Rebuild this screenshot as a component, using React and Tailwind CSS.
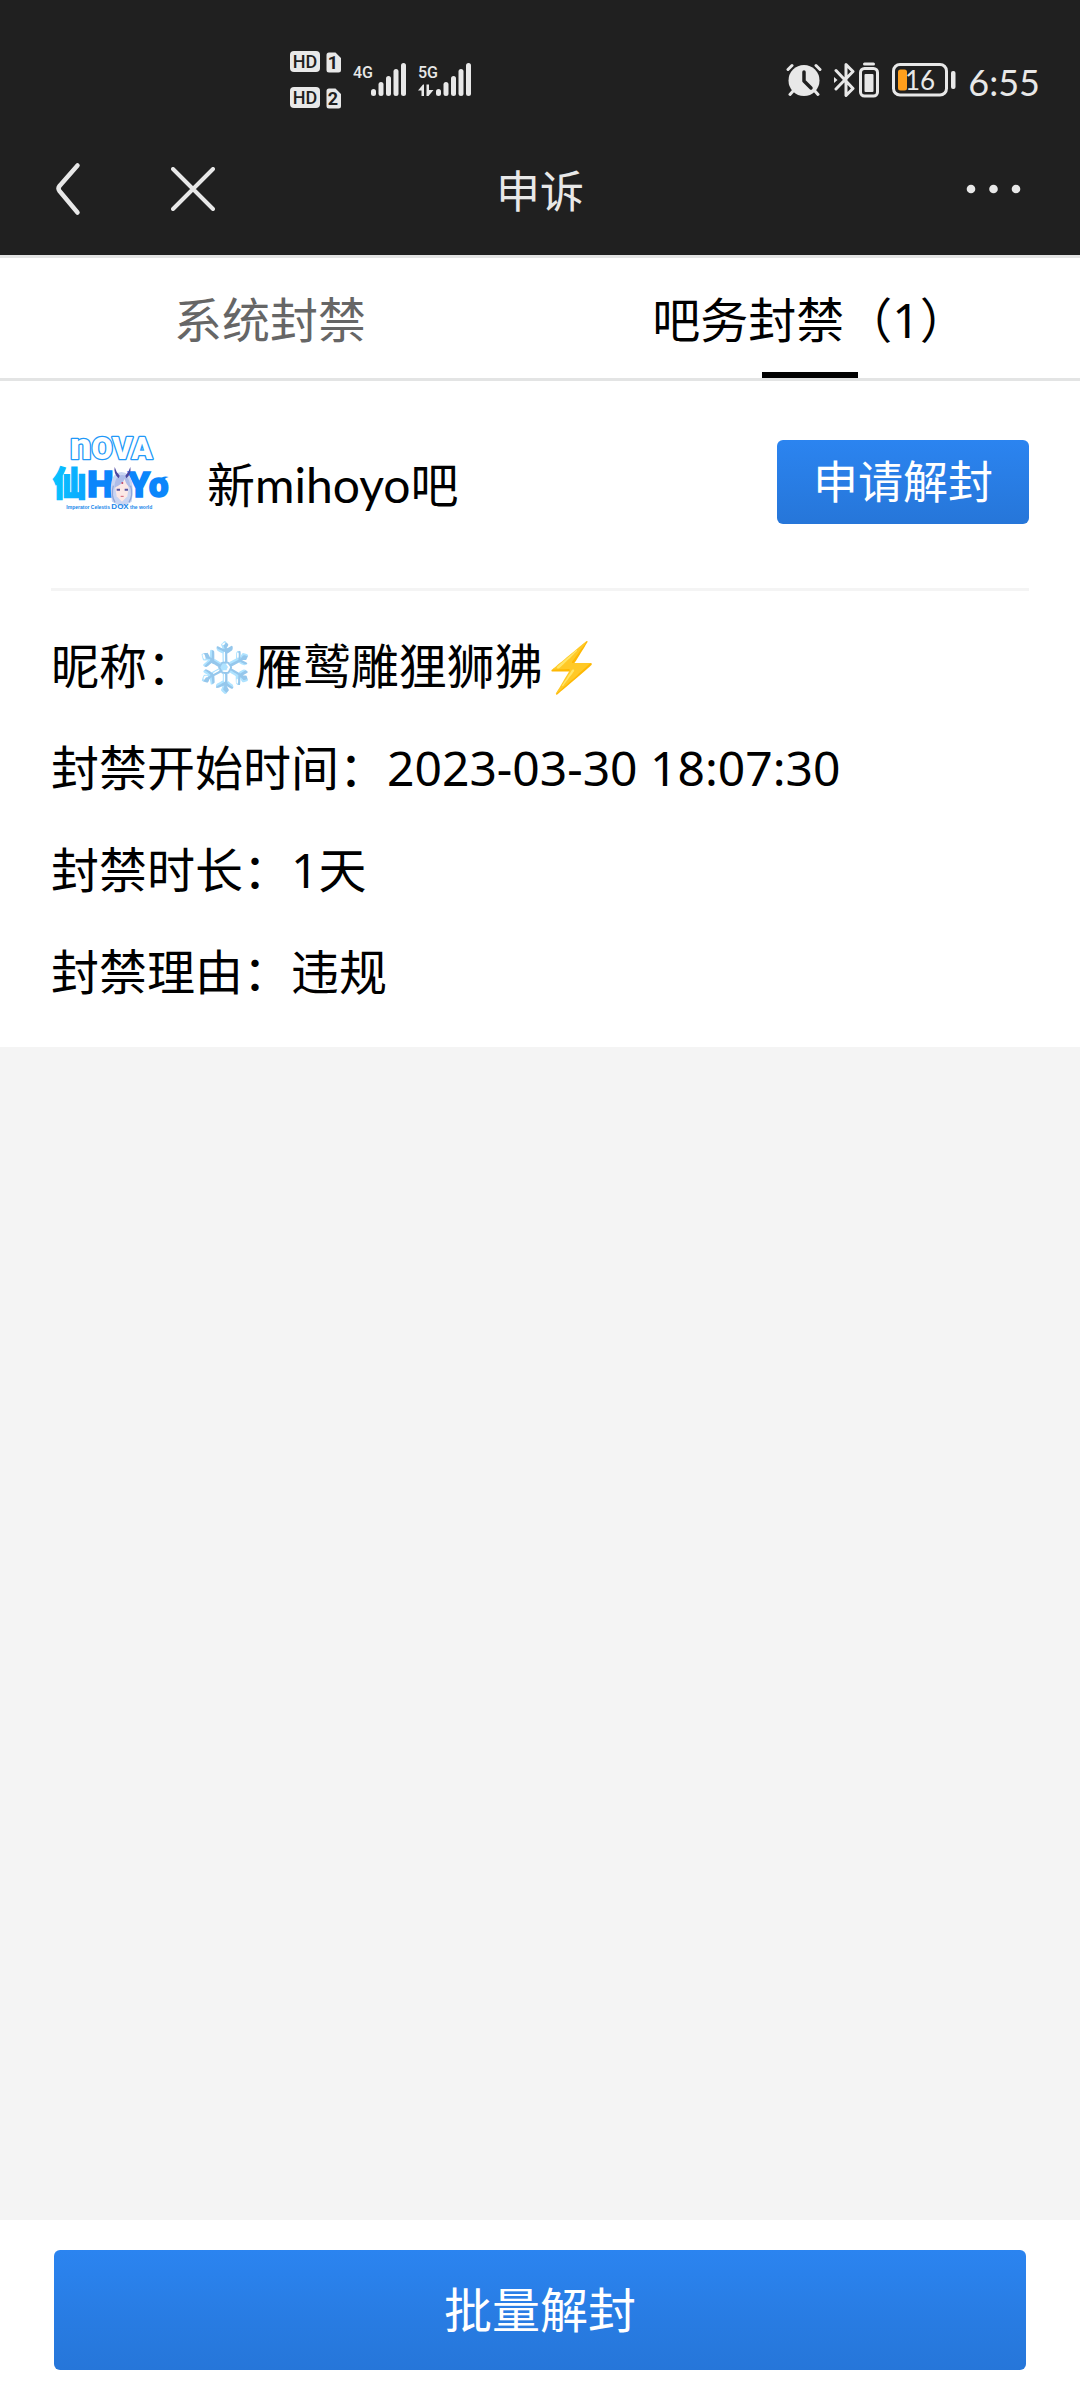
import React from "react";

const FONT = "font-['Noto_Sans','Noto_Sans_CJK_SC','Noto_Color_Emoji',sans-serif]";

function HdSim({ sim }) {
  return (
    <svg width="52" height="22" viewBox="0 0 52 22" fontFamily="Roboto, sans-serif" aria-hidden="true">
      <rect x="0" y="0" width="30" height="21" rx="4" fill="#e8e8e8" />
      <text x="15" y="17" fontSize="18" fontWeight="500" textAnchor="middle" fill="#202020">HD</text>
      <path d="M39 1.500h6.500l5.500 5.500v12a2.500 2.500 0 0 1-2.500 2.500h-9.500a2.500 2.500 0 0 1-2.500-2.500v-15a2.500 2.500 0 0 1 2.500-2.500z" fill="#e8e8e8" />
      <text x="43" y="18" fontSize="18" fontWeight="700" textAnchor="middle" fill="#202020">{sim}</text>
    </svg>
  );
}

function Signal({ label, arrows }) {
  const tops = [26, 19, 13, 6, 0];
  return (
    <svg width="53" height="33" viewBox="0 0 53 33" fill="#e8e8e8" aria-hidden="true">
      <text x="0" y="15" fontSize="16" fontWeight="500" fontFamily="Roboto, sans-serif">{label}</text>
      {arrows && (
        <path d="M0 27.500 5 21.500h1V33H3.500v-5.500zM8.500 21.500H11v5.500h4.500L10.500 33h-2z" />
      )}
      {tops.map((top, i) => (
        <rect key={top} x={18 + i * 7.5} y={top} width="5" height={33 - top} rx="2.500" />
      ))}
    </svg>
  );
}

function Alarm() {
  return (
    <svg width="36" height="34" viewBox="0 0 36 34" fill="none" stroke="#e8e8e8" strokeLinecap="round" aria-hidden="true">
      <circle cx="18" cy="17.500" r="15.500" fill="#e8e8e8" stroke="none" />
      <path d="M2 6.500 6 2.500M34 6.500 30 2.500M8 27l-4 4.500M28 27l4 4.500" strokeWidth="3" />
      <path d="M18 9v9l7 7" stroke="#202020" strokeWidth="3.500" strokeLinejoin="round" />
    </svg>
  );
}

function Bluetooth() {
  return (
    <svg width="22" height="36" viewBox="0 0 22 36" fill="none" stroke="#e8e8e8" strokeWidth="3" strokeLinejoin="round" strokeLinecap="round" aria-hidden="true">
      <path d="M2 8.500 19 26.500l-7 7V2.500l7 7L2 27" />
      <path d="M0 15v6l3.500-3z" fill="#e8e8e8" stroke="none" />
    </svg>
  );
}

function DeviceBattery() {
  return (
    <svg width="20" height="36" viewBox="0 0 20 36" aria-hidden="true">
      <rect x="4" y="0.500" width="12" height="3" rx="1.500" fill="#e8e8e8" />
      <rect x="1.500" y="6.500" width="17" height="27.500" rx="4" fill="none" stroke="#e8e8e8" strokeWidth="3" />
      <rect x="5.500" y="12" width="9" height="18" rx="1" fill="#e8e8e8" />
    </svg>
  );
}

function Battery() {
  return (
    <svg width="64" height="34" viewBox="0 0 64 34" aria-label="16%">
      <rect x="1.500" y="1.500" width="53" height="30.500" rx="6.500" fill="none" stroke="#e8e8e8" strokeWidth="3" />
      <rect x="59" y="8" width="4.500" height="18" rx="2" fill="#e8e8e8" />
      <rect x="6" y="6.500" width="9" height="21" rx="2.500" fill="#ff9f1c" />
      <text x="13" y="27" fontSize="26" fill="#e8e8e8" fontFamily="Lato, sans-serif">16</text>
    </svg>
  );
}

function StatusBar() {
  return (
    <div className="flex h-[123px] items-center justify-between pl-[290px] pr-10 pt-9">
      <div className="flex items-center">
        <div className="flex flex-col gap-[14px]">
          <HdSim sim="1" />
          <HdSim sim="2" />
        </div>
        <div className="ml-[11px] flex gap-3">
          <Signal label="4G" />
          <Signal label="5G" arrows />
        </div>
      </div>
      <div className="flex items-center">
        <Alarm />
        <div className="ml-3 flex gap-[3px]">
          <Bluetooth />
          <DeviceBattery />
        </div>
        <div className="ml-[13px] mr-3">
          <Battery />
        </div>
        <span className="pt-1 font-['Lato',sans-serif] text-[36px] leading-9 text-[#e8e8e8]">6:55</span>
      </div>
    </div>
  );
}

function NavBar() {
  return (
    <div className="grid h-[132px] grid-cols-3 items-center px-[54px]">
      <div className="flex items-center gap-[89px]">
        <button type="button" aria-label="返回">
          <svg width="28" height="54" viewBox="0 0 28 54" fill="none" stroke="#e8e8e8" strokeWidth="4.500" strokeLinecap="round" strokeLinejoin="round" aria-hidden="true">
            <path d="M23.500 3.500 5.500 24q-2 2.500 0 5l18 21.500" />
          </svg>
        </button>
        <button type="button" aria-label="关闭">
          <svg width="44" height="44" viewBox="0 0 44 44" fill="none" stroke="#e8e8e8" strokeWidth="4" strokeLinecap="round" aria-hidden="true">
            <path d="m2 2 40 40M42 2 2 42" />
          </svg>
        </button>
      </div>
      <h1 className="pt-1 text-center text-[44px] leading-[60px] text-[#e8e8e8]">申诉</h1>
      <button type="button" aria-label="更多" className="justify-self-end pr-[5px]">
        <svg width="55" height="10" viewBox="0 0 55 10" fill="#e8e8e8" aria-hidden="true">
          <circle cx="5" cy="5" r="4.300" />
          <circle cx="27.500" cy="5" r="4.300" />
          <circle cx="50" cy="5" r="4.300" />
        </svg>
      </button>
    </div>
  );
}

function Tabs() {
  return (
    <div role="tablist" className="grid h-[126px] grid-cols-2 border-y-[3px] border-[#e3e4e4] bg-white text-5xl leading-[72px]">
      <button type="button" role="tab" aria-selected="false" className="pt-1 text-[#666]">系统封禁</button>
      <button type="button" role="tab" aria-selected="true" className="relative pt-1 text-black">
        吧务封禁（1）
        <span className="absolute inset-x-0 bottom-0 mx-auto h-1.5 w-24 bg-black" />
      </button>
    </div>
  );
}

function ForumLogo() {
  return (
    <svg width="120" height="120" viewBox="0 0 360 360" role="img" aria-label="新mihoyo吧" className="shrink-0">
      <defs>
        <linearGradient id="xian" x1="0" x2="1" y1="0" y2="0">
          <stop offset="0" stopColor="#09c4ff" />
          <stop offset="1" stopColor="#0aa5ff" />
        </linearGradient>
      </defs>
      <text x="58" y="103" fontSize="92" fontWeight="900" fill="#fff" stroke="#2198f8" strokeWidth="8" paintOrder="stroke" strokeLinejoin="round" fontFamily="Roboto, 'Liberation Sans', sans-serif">
        <tspan fontSize="112">n</tspan>OVA
      </text>
      <text x="5" y="214" fontSize="102" fontWeight="900" fill="url(#xian)" stroke="url(#xian)" strokeWidth="4" fontFamily="'Noto Sans CJK SC', sans-serif">仙</text>
      <g fill="#0b86fb" stroke="#0b86fb" strokeWidth="5" fontFamily="Roboto, 'Liberation Sans', sans-serif" fontWeight="900">
        <text x="109" y="217" fontSize="112">H</text>
        <text x="232" y="217" fontSize="104">Yo</text>
      </g>
      <path d="M321 166q16-16 32-10-14 3-22 20z" fill="#0b86fb" />
      <path d="M183 230q-10-60 8-80 20-18 42 0 18 22 9 80l-28 16z" fill="#c9d5f2" />
      <path d="M193 190q3-26 20-34 18 10 20 34l-4 24-16 16-16-16z" fill="#fbe8e6" />
      <path d="M190 188q2-38 24-38t24 38q-12-6-17-26-8 18-31 26z" fill="#aebce8" />
      <path d="M191 126q-4 20 12 34l3-8q-10-9-15-26zM238 126q4 20-12 34l-3-8q10-9 15-26z" fill="#4c489f" />
      <path d="M197 194h10M221 194h10" stroke="#5653a0" strokeWidth="6" />
      <circle cx="214" cy="174" r="3" fill="#c04668" />
      <path d="M209 214h9" stroke="#d25d70" strokeWidth="3" />
      <path d="M187 182q-8 30 5 50M239 182q8 30-5 50" fill="none" stroke="#91a7da" strokeWidth="4" />
      <text x="46" y="252" fontSize="15" fill="#1787ea" fontFamily="'Liberation Sans', sans-serif" fontWeight="700">
        Imperator Celestis <tspan fontSize="24">DOX</tspan> the world
      </text>
    </svg>
  );
}

const DETAILS = [
  ["昵称：", "❄️雁鹫雕狸狮狒⚡"],
  ["封禁开始时间：", "2023-03-30 18:07:30"],
  ["封禁时长：", "1天"],
  ["封禁理由：", "违规"],
];

function BanCard() {
  return (
    <section className="bg-white px-[51px] pb-6 text-5xl text-black">
      <div className="flex h-[210px] items-center border-b-[3px] border-[#f4f4f4]">
        <ForumLogo />
        <h2 className="ml-9 flex-1 font-['Lato','Noto_Sans_CJK_SC',sans-serif] leading-[72px]">新mihoyo吧</h2>
        <button type="button" className="mb-1.5 h-[84px] w-[252px] rounded-md bg-linear-to-b from-[#2b84f0] to-[#2676d9] text-[45px] leading-[60px] text-white">
          申请解封
        </button>
      </div>
      <dl className="pt-6">
        {DETAILS.map(([label, value]) => (
          <div key={label} className="flex h-[102px] items-center leading-[72px]">
            <dt>{label}</dt>
            <dd>{value}</dd>
          </div>
        ))}
      </dl>
    </section>
  );
}

export default function App() {
  return (
    <div className={`flex min-h-screen flex-col bg-[#f4f4f4] ${FONT}`}>
      <header className="bg-[#202020]">
        <StatusBar />
        <NavBar />
      </header>
      <Tabs />
      <main className="flex-1">
        <BanCard />
      </main>
      <footer className="bg-white px-[54px] py-[30px]">
        <button type="button" className="h-[120px] w-full rounded-md bg-linear-to-b from-[#2b84f0] to-[#2676d9] text-5xl leading-[72px] text-white">
          批量解封
        </button>
      </footer>
    </div>
  );
}
